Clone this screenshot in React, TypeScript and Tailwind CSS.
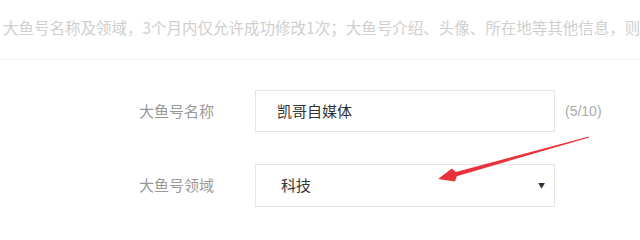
import React from 'react';

const font = { fontFamily: '"Noto Sans CJK SC", "Noto Sans", sans-serif' };

export default function App() {
  return (
    <div className="relative w-[640px] h-[229px] bg-white overflow-hidden" style={font}>
      {/* notice */}
      <div className="h-[60px] border-b border-[#f2f2f2] flex items-center pl-[3px] pb-[3px] overflow-hidden">
        <p className="whitespace-nowrap text-[15.5px] text-[#cfcfcf]">
          大鱼号名称及领域，3个月内仅允许成功修改1次；大鱼号介绍、头像、所在地等其他信息，则每月可修改
        </p>
      </div>

      {/* form */}
      <div className="pl-[139px] pt-[30px] flex flex-col gap-[32px]">
        <div className="flex items-center">
          <label className="w-[116px] text-[15px] text-[#999]">大鱼号名称</label>
          <div className="w-[300px] h-[42px] border border-[#e6e6e6] flex items-center pl-[21px] text-[15px] text-[#333]">
            凯哥自媒体
          </div>
          <span className="ml-[10px] text-[14px] text-[#aaa]" style={{ fontFamily: '"Liberation Sans", sans-serif' }}>
            (5/10)
          </span>
        </div>

        <div className="flex items-center">
          <label className="w-[116px] text-[15px] text-[#999]">大鱼号领域</label>
          <div className="w-[300px] h-[43px] border border-[#e6e6e6] flex items-center justify-between pl-[25px] pr-[9px] text-[15px] text-[#333]">
            <span>科技</span>
            <span className="text-[7px] text-[#333]">▼</span>
          </div>
        </div>
      </div>

      {/* red annotation arrow */}
      <svg className="absolute inset-0 pointer-events-none" width="640" height="229" viewBox="0 0 640 229">
        <polygon
          points="438,179 451.8,168.5 455.8,172 589,136.6 589.2,137.4 456.8,176.2 455,181.5"
          fill="#e8333a"
        />
      </svg>
    </div>
  );
}
